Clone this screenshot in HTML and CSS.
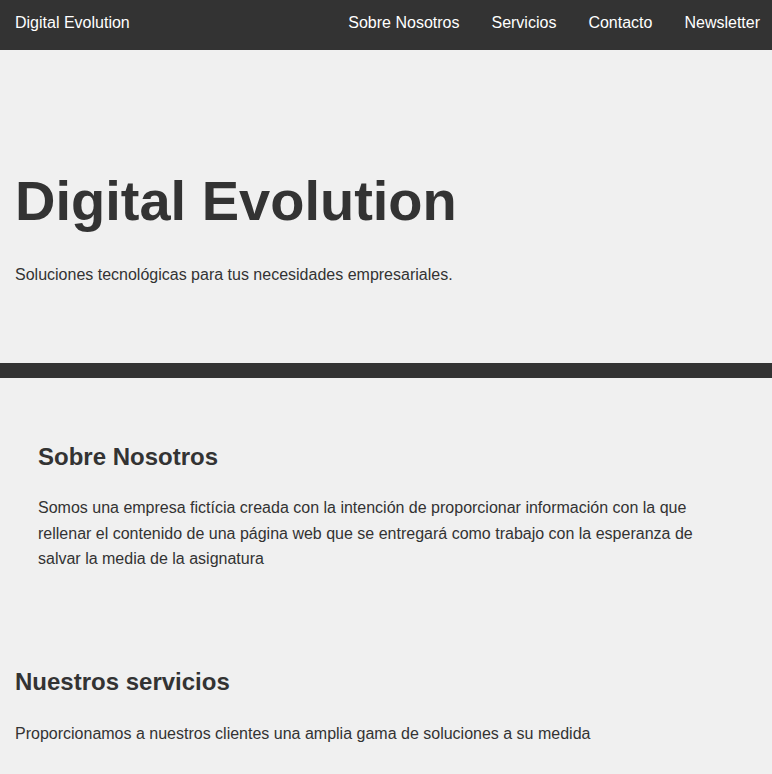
FILE: index.html
```html
<!DOCTYPE html>
<html lang="es">
<head>
<meta charset="utf-8">
<title>Digital Evolution</title>
<link rel="stylesheet" href="styles.css">
</head>
<body>
<header class="topbar">
  <div class="brand">Digital Evolution</div>
  <nav class="nav">
    <a href="#sobre">Sobre Nosotros</a>
    <a href="#servicios">Servicios</a>
    <a href="#contacto">Contacto</a>
    <a href="#newsletter">Newsletter</a>
  </nav>
</header>
<section class="hero">
  <h1 class="hero-title">Digital Evolution</h1>
  <p class="hero-sub">Soluciones tecnológicas para tus necesidades empresariales.</p>
</section>
<div class="divider"></div>
<main class="content">
  <section class="about" id="sobre">
    <h2 class="section-title">Sobre Nosotros</h2>
    <p class="section-text">Somos una empresa fictícia creada con la intención de proporcionar información con la que rellenar el contenido de una página web que se entregará como trabajo con la esperanza de salvar la media de la asignatura</p>
  </section>
  <section class="services" id="servicios">
    <h2 class="section-title">Nuestros servicios</h2>
    <p class="section-text services-text">Proporcionamos a nuestros clientes una amplia gama de soluciones a su medida</p>
  </section>
</main>
</body>
</html>
```
FILE: styles.css
```css
* { box-sizing: border-box; }
html, body {
  margin: 0;
  padding: 0;
  background: #f0f0f0;
  color: #333;
  font-family: "Liberation Sans", Arial, sans-serif;
}
.topbar {
  height: 50px;
  background: #333;
  display: flex;
  align-items: center;
  justify-content: space-between;
  padding: 0 12px 4px 15px;
  color: #fff;
  font-size: 16px;
}
.nav {
  display: flex;
  gap: 32px;
}
.nav a {
  color: #fff;
  text-decoration: none;
}
.hero {
  padding: 116px 15px 79px;
}
.hero-title {
  margin: 0;
  font-size: 56px;
  line-height: 69px;
  font-weight: bold;
}
.hero-sub {
  margin: 31px 0 0;
  font-size: 16px;
  line-height: 18px;
}
.divider {
  height: 15px;
  background: #333;
}
.content {
  padding-top: 65px;
}
.about {
  padding: 0 38px;
}
.services {
  padding: 96px 15px 0;
}
.section-title {
  margin: 0;
  font-size: 24px;
  line-height: 28px;
  font-weight: bold;
}
.section-text {
  margin: 24px 0 0;
  font-size: 16px;
  line-height: 25.6px;
}
.services-text {
  margin-top: 25px;
}
```
